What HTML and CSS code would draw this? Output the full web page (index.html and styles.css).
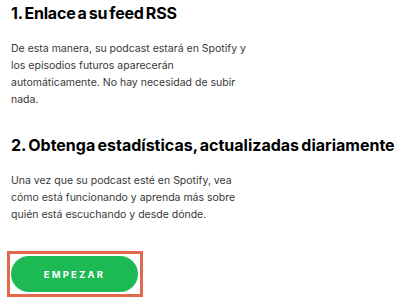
FILE: index.html
```html
<!DOCTYPE html>
<html lang="es">
<head>
    <meta charset="UTF-8">
    <meta name="viewport" content="width=device-width, initial-scale=1.0">
    <title>Spotify for Podcasters</title>
    <link rel="stylesheet" href="styles.css">
</head>
<body>

    <div class="steps">
        <div class="step">
            <h2>1. Enlace a su feed RSS</h2>
            <p>De esta manera, su podcast estará en Spotify y los episodios futuros aparecerán automáticamente. No hay necesidad de subir nada.</p>
        </div>

        <div class="step">
            <h2>2. Obtenga estadísticas, actualizadas diariamente</h2>
            <p>Una vez que su podcast esté en Spotify, vea cómo está funcionando y aprenda más sobre quién está escuchando y desde dónde.</p>
        </div>

        <div class="start-box">
            <button class="start-button">EMPEZAR</button>
        </div>
    </div>

</body>
</html>
```

FILE: styles.css
```css
body {
    font-family: Inter, "Noto Sans", sans-serif;
    background-color: #fff;
    margin: 0;
    padding: 0 11px;
}
.step h2 {
    margin: 3px 0 0;
    font-size: 16px;
    line-height: 20px;
    font-weight: 700;
    letter-spacing: -0.2px;
    word-spacing: -1.5px;
    white-space: nowrap;
    color: #000;
}
.step + .step h2 {
    letter-spacing: 0;
}
.step p {
    max-width: 250px;
    margin: 17px 0 0;
    font-size: 10.5px;
    line-height: 17px;
    color: #383838;
}
.step + .step {
    margin-top: 27px;
}
.start-box {
    display: inline-block;
    margin: 28px 0 0 -4px;
    padding: 2px 2px 2px 1px;
    border: 3px solid #e2694b;
}
.start-button {
    display: block;
    width: 127px;
    height: 36px;
    background-color: #1db954;
    color: #fff;
    font-family: inherit;
    font-size: 9.5px;
    font-weight: 700;
    letter-spacing: 2.2px;
    border: none;
    border-radius: 18px;
    cursor: pointer;
}
```
